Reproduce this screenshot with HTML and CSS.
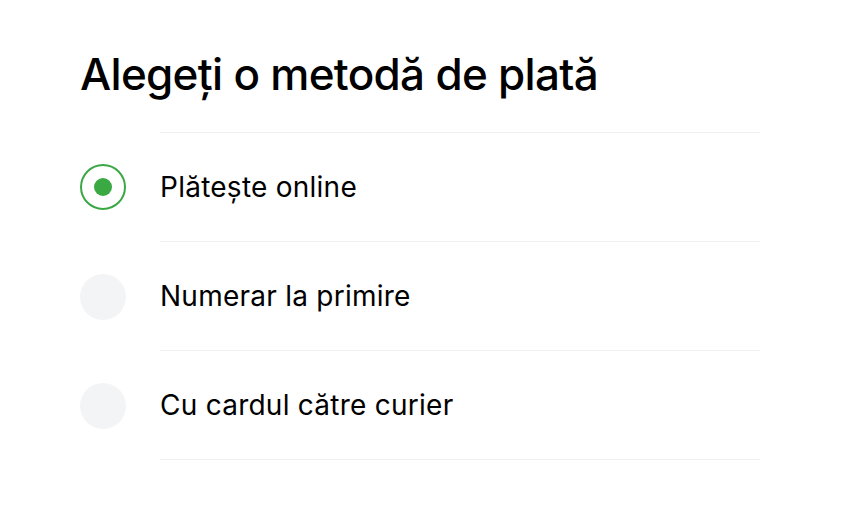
FILE: index.html
```html
<!DOCTYPE html>
<html lang="ro">
<head>
<meta charset="utf-8">
<link rel="stylesheet" href="styles.css">
</head>
<body>
<main class="page">
  <h1 class="title">Alegeți o metodă de plată</h1>
  <ul class="options">
    <li class="option">
      <span class="radio radio-on"><span class="dot"></span></span>
      <span class="label">Plătește online</span>
    </li>
    <li class="option">
      <span class="radio"></span>
      <span class="label">Numerar la primire</span>
    </li>
    <li class="option">
      <span class="radio"></span>
      <span class="label">Cu cardul către curier</span>
    </li>
  </ul>
</main>
</body>
</html>
```
FILE: styles.css
```css
html, body {
  margin: 0;
  background: #ffffff;
}
body {
  font-family: Inter, "Noto Sans", sans-serif;
  color: #000000;
}
.page {
  padding: 48px 81px 0 80px;
}
.title {
  margin: 0;
  font-size: 44px;
  line-height: 52px;
  font-weight: 500;
  letter-spacing: -0.7px;
}
.options {
  list-style: none;
  margin: 32px 0 0 0;
  padding: 0;
}
.option {
  display: flex;
  align-items: center;
}
.radio {
  flex: 0 0 auto;
  width: 46px;
  height: 46px;
  border-radius: 50%;
  background: #f3f4f6;
  box-sizing: border-box;
  display: flex;
  align-items: center;
  justify-content: center;
}
.radio-on {
  background: #ffffff;
  border: 2px solid #3ca845;
}
.dot {
  width: 18px;
  height: 18px;
  border-radius: 50%;
  background: #3aa843;
}
.label {
  flex: 1;
  margin-left: 34px;
  height: 108px;
  display: flex;
  align-items: center;
  border-bottom: 1px solid #f0f0f0;
  font-size: 28px;
  font-weight: 400;
  letter-spacing: 0.25px;
}
.option:first-child .label {
  border-top: 1px solid #f0f0f0;
}
```
